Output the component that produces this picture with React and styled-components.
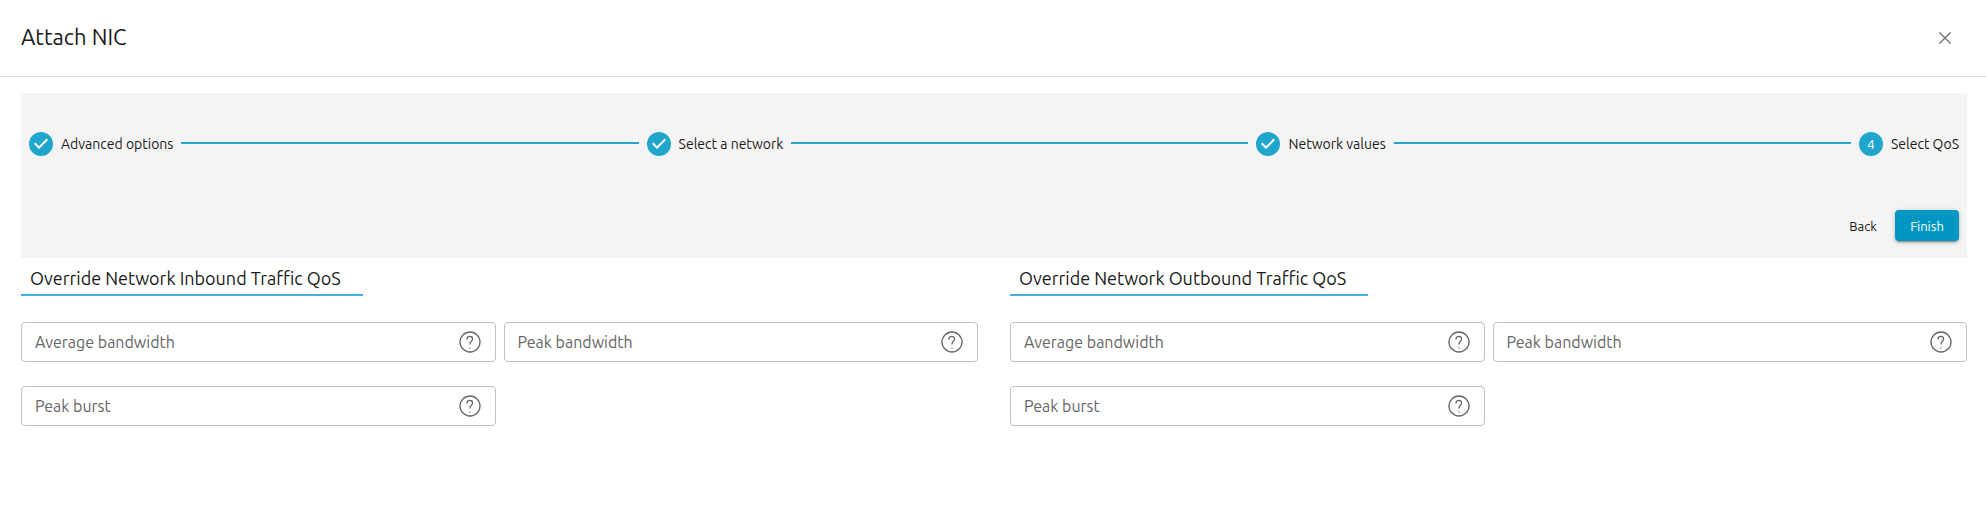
import React from "react";
import styled, { createGlobalStyle } from "styled-components";

const GlobalStyle = createGlobalStyle`
  *, *::before, *::after { box-sizing: border-box; }
  body {
    margin: 0;
    background: #fff;
    color: #1a1a1a;
    font-family: Ubuntu, "Noto Sans", sans-serif;
    font-size: 16px;
  }
  button, input { font: inherit; }
`;

const Header = styled.header`
  display: flex;
  align-items: center;
  justify-content: space-between;
  height: 77px;
  padding: 0 29px 0 21px;
  border-bottom: 1px solid #dedede;
`;

const Title = styled.h1`
  margin: 0;
  padding-bottom: 2px;
  font-size: 22px;
  line-height: 28px;
  font-weight: 400;
`;

const CloseButton = styled.button`
  display: flex;
  padding: 0;
  border: 0;
  background: none;
  color: #6b6b6b;
  cursor: pointer;
`;

const Content = styled.main`
  padding: 16px 19px 16px 21px;
`;

const Panel = styled.section`
  padding: 32px 8px 17px;
  background: #f4f4f4;
`;

const Stepper = styled.ol`
  display: flex;
  align-items: center;
  gap: 8px;
  height: 36px;
  margin: 0 0 49px;
  padding: 0;
  list-style: none;
`;

const Step = styled.li`
  display: flex;
  flex: ${({ $last }) => ($last ? "0 0 auto" : "1 1 auto")};
  align-items: center;
  gap: 8px;
`;

const StepLabel = styled.span`
  display: flex;
  align-items: center;
  gap: 8px;
  padding-top: 2px;
  font-size: 14px;
  line-height: 20px;
  white-space: nowrap;
`;

const Connector = styled.span`
  flex: 1;
  height: 2px;
  background: #20a5cc;
`;

const StepNumber = styled.span`
  display: grid;
  place-items: center;
  width: 24px;
  height: 24px;
  border-radius: 50%;
  background: #20a5cc;
  color: #fff;
  font-size: 13px;
`;

const Actions = styled.div`
  display: flex;
  justify-content: flex-end;
`;

const Button = styled.button`
  min-width: 64px;
  height: 31px;
  padding: 0 8px;
  border: 0;
  border-radius: 4px;
  background: ${({ $primary }) => ($primary ? "#0098c3" : "transparent")};
  color: ${({ $primary }) => ($primary ? "#fff" : "#1a1a1a")};
  box-shadow: ${({ $primary }) =>
    $primary
      ? "0 3px 1px -2px rgba(0,0,0,.2), 0 2px 2px rgba(0,0,0,.14), 0 1px 5px rgba(0,0,0,.2)"
      : "none"};
  font-size: 13px;
  line-height: 20px;
  cursor: pointer;
`;

const Groups = styled.form`
  display: grid;
  grid-template-columns: 1fr 1fr;
  gap: 32px;
`;

const Group = styled.fieldset`
  min-width: 0;
  margin: 0;
  padding: 0;
  border: 0;
`;

const Legend = styled.legend`
  margin-bottom: 26px;
  padding: 7px 22px 3px 9px;
  border-bottom: 2px solid #40b3d9;
  font-size: 18px;
  line-height: 26px;
`;

const Fields = styled.div`
  display: grid;
  grid-template-columns: 1fr 1fr;
  gap: 24px 8px;
`;

const Field = styled.div`
  display: grid;
  grid-template-columns: 1fr 24px;
  align-items: center;
  height: 40px;
  padding: 0 13px;
  border: 1px solid #c0c0c0;
  border-radius: 4px;
  color: #666;
`;

const Label = styled.label`
  grid-area: 1 / 1;
  font-size: 16px;
  line-height: 24px;
  pointer-events: none;
`;

const Input = styled.input`
  grid-area: 1 / 1;
  width: 100%;
  height: 38px;
  padding: 0;
  border: 0;
  outline: 0;
  background: none;
  color: #1a1a1a;

  &:not(:placeholder-shown) + ${Label} { visibility: hidden; }
`;

const CheckIcon = () => (
  <svg width="24" height="24" viewBox="0 0 24 24" fill="#20a5cc" aria-hidden="true">
    <path fill="#fff" d="M4 7h16v11H4z" />
    <path d="M12 0a12 12 0 1 0 0 24 12 12 0 0 0 0-24zm-2 17l-5-5 1.4-1.4 3.6 3.6 7.6-7.6L19 8l-9 9z" />
  </svg>
);

const CloseIcon = () => (
  <svg width="24" height="24" viewBox="0 0 24 24" fill="none" stroke="currentColor" strokeWidth="1.2" strokeLinecap="round" aria-hidden="true">
    <path d="M6.76 17.24 17.24 6.76M6.76 6.76l10.48 10.48" />
  </svg>
);

const HelpIcon = () => (
  <svg
    width="24" height="24" viewBox="0 0 24 24" fill="none" stroke="currentColor"
    strokeWidth="1.3" strokeLinecap="round" strokeLinejoin="round" aria-hidden="true"
  >
    <circle cx="12" cy="12" r="10" />
    <path d="M9 9c0-3.5 5.5-3.5 5.5 0 0 2.5-2.5 2-2.5 5M12 18.01l.01-.011" />
  </svg>
);

const STEPS = [
  { label: "Advanced options", done: true },
  { label: "Select a network", done: true },
  { label: "Network values", done: true },
  { label: "Select QoS", done: false },
];

const GROUPS = [
  { id: "inbound", title: "Override Network Inbound Traffic QoS" },
  { id: "outbound", title: "Override Network Outbound Traffic QoS" },
];

const FIELDS = ["Average bandwidth", "Peak bandwidth", "Peak burst"];

export default function App() {
  return (
    <>
      <GlobalStyle />
      <Header>
        <Title>Attach NIC</Title>
        <CloseButton type="button" aria-label="Close"><CloseIcon /></CloseButton>
      </Header>
      <Content>
        <Panel>
          <Stepper>
            {STEPS.map(({ label, done }, i) => {
              const last = i === STEPS.length - 1;
              return (
                <Step key={label} $last={last} aria-current={last ? "step" : undefined}>
                  <StepLabel>
                    {done ? <CheckIcon /> : <StepNumber>{i + 1}</StepNumber>}
                    <span>{label}</span>
                  </StepLabel>
                  {!last && <Connector />}
                </Step>
              );
            })}
          </Stepper>
          <Actions>
            <Button type="button">Back</Button>
            <Button type="submit" form="qos" $primary>Finish</Button>
          </Actions>
        </Panel>
        <Groups id="qos">
          {GROUPS.map(({ id, title }) => (
            <Group key={id}>
              <Legend>{title}</Legend>
              <Fields>
                {FIELDS.map((name) => {
                  const fieldId = `${id}-${name.toLowerCase().replace(" ", "-")}`;
                  return (
                    <Field key={name}>
                      <Input id={fieldId} placeholder=" " inputMode="numeric" />
                      <Label htmlFor={fieldId}>{name}</Label>
                      <HelpIcon />
                    </Field>
                  );
                })}
              </Fields>
            </Group>
          ))}
        </Groups>
      </Content>
    </>
  );
}
